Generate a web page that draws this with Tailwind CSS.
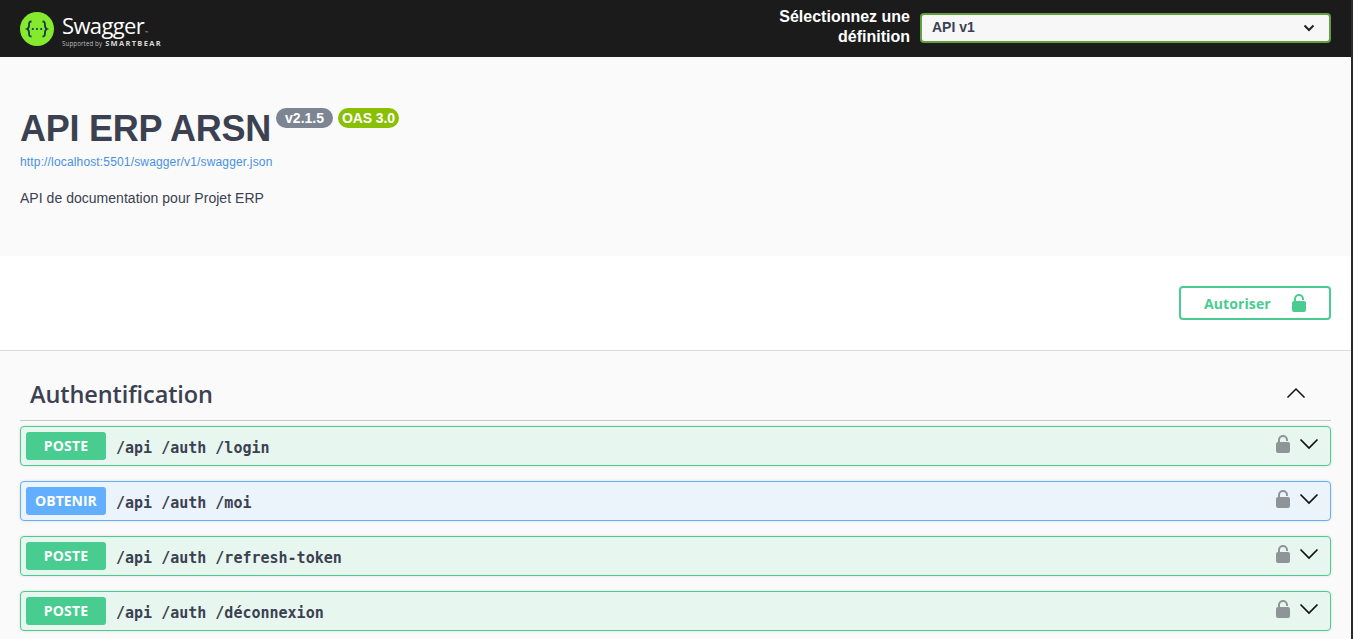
<!DOCTYPE html>
<html lang="fr">
<head>
<meta charset="utf-8">
<title>Swagger UI</title>
<script src="https://cdn.jsdelivr.net/npm/@tailwindcss/browser@4"></script>
</head>
<body class="bg-white h-[639px] overflow-hidden flex font-['Liberation_Sans',sans-serif] text-[#3b4151]">
<div class="flex-1 min-w-0">
<header class="h-[57px] bg-[#1b1b1b] flex items-center justify-between pl-5 pr-5">
  <div class="flex items-center gap-[8px]">
    <svg width="34" height="34" viewBox="0 0 34 34" class="shrink-0">
      <circle cx="17" cy="17" r="17" fill="#85ea2d"/>
      <path d="M11.500 9.500c-2.600 0-2.400 1.600-2.400 3.200 0 2.400-.4 3.600-2 4.300 1.600.7 2 1.900 2 4.300 0 1.600-.2 3.200 2.400 3.200M22.500 9.500c2.600 0 2.400 1.600 2.400 3.200 0 2.400.4 3.600 2 4.300-1.600.7-2 1.900-2 4.300 0 1.600.2 3.200-2.400 3.200" fill="none" stroke="#173647" stroke-width="1.800"/>
      <circle cx="12.800" cy="17" r="1.100" fill="#173647"/><circle cx="17" cy="17" r="1.100" fill="#173647"/><circle cx="21.200" cy="17" r="1.100" fill="#173647"/>
    </svg>
    <div class="flex flex-col text-white mt-[3px]">
      <span class="font-['Open_Sans',sans-serif] text-[22px] leading-[26px] tracking-[-0.65px] h-[26px]">Swagger<span class="text-[4px] tracking-normal text-[#bbb] ml-[1px]">™</span></span>
      <span class="flex items-center gap-[3px] mt-[1px] leading-[9px]"><span class="font-['Open_Sans',sans-serif] text-[6.200px] tracking-[0.1px] text-[#bdbdbd]">Supported by</span><span class="font-['Open_Sans',sans-serif] font-bold text-[7.500px] tracking-[1.300px] text-[#d8d8d8]">SMARTBEAR</span></span>
    </div>
  </div>
  <div class="flex items-center gap-[10px]">
    <label class="w-[140px] text-right text-white font-bold text-[16px] leading-[20px] mb-[3px]">Sélectionnez une définition</label>
    <div class="w-[411px] h-[30px] mb-[2px] bg-[#f7f7f7] border-2 border-[#62a03f] rounded-[4px] flex items-center justify-between pl-[10px] pr-[14px]">
      <span class="font-bold text-[14px] text-[#3b4151]">API v1</span>
      <svg width="12" height="8" viewBox="0 0 12 8"><path d="M1.500 1.500 6 6l4.500-4.500" fill="none" stroke="#222" stroke-width="2"/></svg>
    </div>
  </div>
</header>

<section class="h-[199px] bg-[#fafafa] px-5 pt-[50px]">
  <div class="flex items-start">
    <h1 class="text-[36px] font-bold leading-[43px] tracking-[-0.25px] text-[#3b4151] whitespace-nowrap">API ERP ARSN</h1>
    <span class="ml-[5px] mt-[1px] h-[20px] px-[9px] rounded-[10px] bg-[#7d8492] text-white font-bold text-[14px] leading-[20px]">v2.1.5</span>
    <span class="ml-[5px] mt-[1px] h-[20px] px-1 rounded-[10px] bg-[#89bf04] text-white font-bold text-[14px] leading-[20px] tracking-[-0.1px]">OAS 3.0</span>
  </div>
  <a class="block mt-[4px] text-[12px] leading-[16px] tracking-[0.155px] text-[#4990e2]">http://localhost:5501/swagger/v1/swagger.json</a>
  <p class="mt-[18px] text-[14px] leading-[21px] tracking-[0.03px]">API de documentation pour Projet ERP</p>
</section>

<section class="h-[95px] bg-white border-b border-[#dcdcdc] shadow-[0_1px_2px_rgba(0,0,0,0.1)] flex justify-end items-start pt-[30px] pr-5">
  <button class="w-[152px] h-[34px] border-2 border-[#49cc90] rounded-[4px] bg-white flex items-center pl-[23px] text-[#49cc90] font-['Open_Sans',sans-serif] font-bold text-[14px]">
    <span class="tracking-[0.1px]">Autoriser</span>
    <svg class="ml-[21px] mb-[1px]" width="14" height="18" viewBox="0 0 14 18"><rect y="7" width="14" height="11" rx="2" fill="#49cc90"/><path d="M3 8V5a4 4 0 0 1 8 0v1" fill="none" stroke="#49cc90" stroke-width="2"/></svg>
  </button>
</section>

<main class="bg-[#fafafa] h-[288px] px-5 overflow-hidden">
  <div class="h-[70px] border-b border-[#c6c8cb] flex items-center justify-between pl-[10px] pr-[25px]">
    <h2 class="font-['Open_Sans',sans-serif] font-semibold text-[23.500px] text-[#3b4151] tracking-[-0.1px] pt-[19px]">Authentification</h2>
    <svg class="mt-[15px]" width="20" height="12" viewBox="0 0 20 12"><path d="M1.500 10.500 10 2l8.500 8.500" fill="none" stroke="#111" stroke-width="1.500"/></svg>
  </div>
  <div class="flex flex-col gap-[15px] mt-[5px]">
    <div class="h-[40px] rounded-[4px] border border-[#49cc90] bg-[#e8f6f0] flex items-center pl-[5px] pr-[11px] shadow-[0_0_3px_rgba(0,0,0,0.12)]">
      <span class="w-[80px] h-[28px] rounded-[3px] bg-[#49cc90] text-white text-center font-['Open_Sans',sans-serif] font-bold text-[14px] leading-[27px] tracking-[0.2px]">POSTE</span>
      <span class="ml-[10px] flex-1 pt-[4px] font-['DejaVu_Sans_Mono',monospace] font-semibold text-[15px] text-[#3b4151]">/api /auth /login</span>
      <svg class="mb-[4px]" width="14" height="18" viewBox="0 0 14 18"><rect y="7" width="14" height="11" rx="2" fill="#8f9499"/><path d="M3 8V5a4 4 0 0 1 8 0v1" fill="none" stroke="#8f9499" stroke-width="2"/></svg>
      <svg class="ml-[9px] mb-[4px]" width="20" height="12" viewBox="0 0 20 12"><path d="M1.500 1.500 10 10l8.500-8.500" fill="none" stroke="#111" stroke-width="1.700"/></svg>
    </div>
    <div class="h-[40px] rounded-[4px] border border-[#61affe] bg-[#ebf3fb] flex items-center pl-[5px] pr-[11px] shadow-[0_0_3px_rgba(0,0,0,0.12)]">
      <span class="w-[80px] h-[28px] rounded-[3px] bg-[#61affe] text-white text-center font-['Open_Sans',sans-serif] font-bold text-[14px] leading-[27px]">OBTENIR</span>
      <span class="ml-[10px] flex-1 pt-[4px] font-['DejaVu_Sans_Mono',monospace] font-semibold text-[15px] text-[#3b4151]">/api /auth /moi</span>
      <svg class="mb-[4px]" width="14" height="18" viewBox="0 0 14 18"><rect y="7" width="14" height="11" rx="2" fill="#8f9499"/><path d="M3 8V5a4 4 0 0 1 8 0v1" fill="none" stroke="#8f9499" stroke-width="2"/></svg>
      <svg class="ml-[9px] mb-[4px]" width="20" height="12" viewBox="0 0 20 12"><path d="M1.500 1.500 10 10l8.500-8.500" fill="none" stroke="#111" stroke-width="1.700"/></svg>
    </div>
    <div class="h-[40px] rounded-[4px] border border-[#49cc90] bg-[#e8f6f0] flex items-center pl-[5px] pr-[11px] shadow-[0_0_3px_rgba(0,0,0,0.12)]">
      <span class="w-[80px] h-[28px] rounded-[3px] bg-[#49cc90] text-white text-center font-['Open_Sans',sans-serif] font-bold text-[14px] leading-[27px] tracking-[0.2px]">POSTE</span>
      <span class="ml-[10px] flex-1 pt-[4px] font-['DejaVu_Sans_Mono',monospace] font-semibold text-[15px] text-[#3b4151]">/api /auth /refresh-token</span>
      <svg class="mb-[4px]" width="14" height="18" viewBox="0 0 14 18"><rect y="7" width="14" height="11" rx="2" fill="#8f9499"/><path d="M3 8V5a4 4 0 0 1 8 0v1" fill="none" stroke="#8f9499" stroke-width="2"/></svg>
      <svg class="ml-[9px] mb-[4px]" width="20" height="12" viewBox="0 0 20 12"><path d="M1.500 1.500 10 10l8.500-8.500" fill="none" stroke="#111" stroke-width="1.700"/></svg>
    </div>
    <div class="h-[40px] rounded-[4px] border border-[#49cc90] bg-[#e8f6f0] flex items-center pl-[5px] pr-[11px] shadow-[0_0_3px_rgba(0,0,0,0.12)]">
      <span class="w-[80px] h-[28px] rounded-[3px] bg-[#49cc90] text-white text-center font-['Open_Sans',sans-serif] font-bold text-[14px] leading-[27px] tracking-[0.2px]">POSTE</span>
      <span class="ml-[10px] flex-1 pt-[4px] font-['DejaVu_Sans_Mono',monospace] font-semibold text-[15px] text-[#3b4151]">/api /auth /déconnexion</span>
      <svg class="mb-[4px]" width="14" height="18" viewBox="0 0 14 18"><rect y="7" width="14" height="11" rx="2" fill="#8f9499"/><path d="M3 8V5a4 4 0 0 1 8 0v1" fill="none" stroke="#8f9499" stroke-width="2"/></svg>
      <svg class="ml-[9px] mb-[4px]" width="20" height="12" viewBox="0 0 20 12"><path d="M1.500 1.500 10 10l8.500-8.500" fill="none" stroke="#111" stroke-width="1.700"/></svg>
    </div>
  </div>
</main>
</div>
<div class="w-[2px] shrink-0 bg-[#2b2b2b]"></div>
</body>
</html>
